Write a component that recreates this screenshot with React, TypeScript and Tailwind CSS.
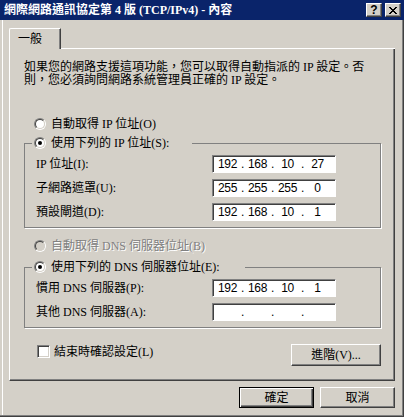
import { Fragment } from "react";

function Radio({ checked, disabled }: { checked?: boolean; disabled?: boolean }) {
  return (
    <span className="flex h-[12px] w-[12px] shrink-0 rounded-full border border-t-[#808080] border-l-[#808080] border-r-white border-b-white">
      <span
        className={`flex flex-1 items-center justify-center rounded-full border border-t-[#404040] border-l-[#404040] border-r-[#d4d0c8] border-b-[#d4d0c8] ${
          disabled ? "bg-[#d4d0c8]" : "bg-white"
        }`}
      >
        {checked && <span className="h-[4px] w-[4px] rounded-full bg-black" />}
      </span>
    </span>
  );
}

function IpBox({ parts }: { parts: string[] }) {
  return (
    <div className="flex h-[18px] w-[124px] items-center border border-t-[#808080] border-l-[#808080] border-r-white border-b-white bg-white pl-[3px] font-['Liberation_Sans',sans-serif] text-[12px] tracking-[-0.3px] shadow-[inset_1px_1px_0_#404040]">
      {parts.map((p, i) => (
        <Fragment key={i}>
          {i > 0 && <span className="w-[7px] text-center">.</span>}
          <span className="w-[23px] text-center">{p}</span>
        </Fragment>
      ))}
    </div>
  );
}

function Btn({ label, w, primary }: { label: string; w: string; primary?: boolean }) {
  return (
    <button
      className={`flex h-[21px] items-center justify-center ${w} ${
        primary
          ? "border border-black shadow-[inset_1px_1px_0_#fff,inset_-1px_-1px_0_#404040,inset_-2px_-2px_0_#808080]"
          : "border border-t-white border-l-white border-r-[#404040] border-b-[#404040] shadow-[inset_-1px_-1px_0_#808080]"
      }`}
    >
      {label}
    </button>
  );
}

function Row({ label, parts }: { label: string; parts: string[] }) {
  return (
    <>
      <span>{label}</span>
      <IpBox parts={parts} />
    </>
  );
}

export default function App() {
  return (
    <div className="h-[417px] w-[404px] bg-[#d4d0c8] font-['Liberation_Serif','Noto_Sans_CJK_TC',serif] text-[12px] leading-[12px] text-black">
      <div className="flex h-[20px] items-center bg-[#0a246a] pl-[4px] pr-[3px]">
        <span className="flex-1 font-bold text-white">網際網路通訊協定第 4 版 (TCP/IPv4) - 內容</span>
        <span className="flex h-[14px] w-[16px] items-center justify-center border border-t-white border-l-white border-r-[#404040] border-b-[#404040] bg-[#d4d0c8] font-['Liberation_Sans',sans-serif] text-[12px] font-bold shadow-[inset_-1px_-1px_0_#808080]">
          ?
        </span>
        <span className="ml-[3px] flex h-[14px] w-[16px] items-center justify-center border border-t-white border-l-white border-r-[#404040] border-b-[#404040] bg-[#d4d0c8] shadow-[inset_-1px_-1px_0_#808080]">
          <svg width="8" height="7" viewBox="0 0 8 7" shapeRendering="crispEdges">
            <path d="M0 0h2v1H0zM6 0h2v1H6zM1 1h2v1H1zM5 1h2v1H5zM2 2h4v1H2zM3 3h2v1H3zM2 4h4v1H2zM1 5h2v1H1zM5 5h2v1H5zM0 6h2v1H0zM6 6h2v1H6z" fill="#000" />
          </svg>
        </span>
      </div>

      <div className="flex h-[397px] flex-col pl-[9px] shadow-[inset_-1px_-1px_0_#404040,inset_-2px_-2px_0_#808080,inset_2px_0_0_#d4d0c8,inset_3px_0_0_#fff]">
        <div className="mt-[8px] flex h-[21px] w-[386px]">
          <div className="w-[52px] rounded-tl-[2px] border-t border-l border-r border-t-white border-l-white border-r-[#404040] pl-[8px] pt-[4px] shadow-[inset_-1px_0_0_#808080]">
            一般
          </div>
          <div className="flex-1 border-b border-white" />
        </div>

        <div className="flex h-[332px] w-[386px] flex-col border-l border-r border-b border-l-white border-r-[#404040] border-b-[#404040] pl-[14px] pr-[13px] pt-[12px] shadow-[inset_-1px_-1px_0_#808080]">
          <p className="leading-[13px]">
            如果您的網路支援這項功能，您可以取得自動指派的 IP 設定。否
            <br />
            則，您必須詢問網路系統管理員正確的 IP 設定。
          </p>

          <div className="mt-[31px] flex h-[12px] items-center gap-[5px] pl-[10px]">
            <Radio />
            <span>自動取得 IP 位址(O)</span>
          </div>

          <fieldset className="mt-[7px] border border-[#808080] px-[7px] pb-[6px] pt-[6px] shadow-[1px_1px_0_#fff]">
            <legend className="w-[160px] pl-[2px]">
              <div className="flex h-[12px] items-center gap-[5px]">
                <Radio checked />
                <span>使用下列的 IP 位址(S):</span>
              </div>
            </legend>
            <div className="grid grid-cols-[176px_124px] items-center gap-y-[6px] pl-[4px]">
              <Row label="IP 位址(I):" parts={["192", "168", "10", "27"]} />
              <Row label="子網路遮罩(U):" parts={["255", "255", "255", "0"]} />
              <Row label="預設閘道(D):" parts={["192", "168", "10", "1"]} />
            </div>
          </fieldset>

          <div className="mt-[12px] flex h-[12px] items-center gap-[5px] pl-[10px] text-[#808080] [text-shadow:1px_1px_0_#fff]">
            <Radio disabled />
            <span>自動取得 DNS 伺服器位址(B)</span>
          </div>

          <fieldset className="mt-[9px] border border-[#808080] px-[7px] pb-[6px] pt-[6px] shadow-[1px_1px_0_#fff]">
            <legend className="w-[213px] pl-[2px]">
              <div className="flex h-[12px] items-center gap-[5px]">
                <Radio checked />
                <span>使用下列的 DNS 伺服器位址(E):</span>
              </div>
            </legend>
            <div className="grid grid-cols-[176px_124px] items-center gap-y-[6px] pl-[4px]">
              <Row label="慣用 DNS 伺服器(P):" parts={["192", "168", "10", "1"]} />
              <Row label="其他 DNS 伺服器(A):" parts={["", "", "", ""]} />
            </div>
          </fieldset>

          <div className="mt-[16px] flex items-start justify-between">
            <div className="ml-[13px] mt-[1px] flex items-center gap-[4px]">
              <span className="h-[13px] w-[13px] border border-t-[#808080] border-l-[#808080] border-r-white border-b-white bg-white shadow-[inset_1px_1px_0_#404040,inset_-1px_-1px_0_#d4d0c8]" />
              <span>結束時確認設定(L)</span>
            </div>
            <button className="flex h-[22px] w-[90px] items-center justify-center border border-t-white border-l-white border-r-[#404040] border-b-[#404040] shadow-[inset_-1px_-1px_0_#808080]">
              進階(V)...
            </button>
          </div>
        </div>

        <div className="mt-[6px] flex w-[386px] justify-end gap-[6px]">
          <Btn label="確定" w="w-[75px]" primary />
          <Btn label="取消" w="w-[75px]" />
        </div>
      </div>
    </div>
  );
}
